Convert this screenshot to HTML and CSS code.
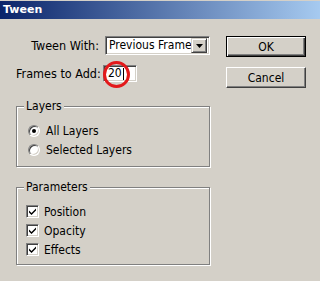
FILE: index.html
```html
<!DOCTYPE html>
<html>
<head>
<meta charset="utf-8">
<link rel="stylesheet" href="styles.css">
</head>
<body>
<div class="window">
  <div class="titlebar">Tween</div>
  <div class="content">
    <div class="left">
      <div class="form">
        <label class="lbl">Tween With:</label>
        <div class="select">
          <span class="select-text">Previous Frame</span>
          <span class="select-btn"><svg width="7" height="4" viewBox="0 0 7 4"><path d="M0 0h7L3.5 4z" fill="#000"/></svg></span>
        </div>
        <label class="lbl">Frames to Add:</label>
        <div class="input-wrap">
          <div class="input">20<span class="caret"></span></div>
          <span class="circle"></span>
        </div>
      </div>
      <div class="group layers">
        <span class="legend">Layers</span>
        <div class="opt"><span class="radio on"></span>All Layers</div>
        <div class="opt"><span class="radio"></span>Selected Layers</div>
      </div>
      <div class="group params">
        <span class="legend">Parameters</span>
        <div class="opt"><span class="check"><svg width="9" height="9" viewBox="0 0 9 9"><path d="M1 3.5l2.5 2.5L8 1.5v2L3.5 8 1 5.5z" fill="#000"/></svg></span>Position</div>
        <div class="opt"><span class="check"><svg width="9" height="9" viewBox="0 0 9 9"><path d="M1 3.5l2.5 2.5L8 1.5v2L3.5 8 1 5.5z" fill="#000"/></svg></span>Opacity</div>
        <div class="opt"><span class="check"><svg width="9" height="9" viewBox="0 0 9 9"><path d="M1 3.5l2.5 2.5L8 1.5v2L3.5 8 1 5.5z" fill="#000"/></svg></span>Effects</div>
      </div>
    </div>
    <div class="right">
      <div class="btn default">OK</div>
      <div class="btn">Cancel</div>
    </div>
  </div>
</div>
</body>
</html>
```
FILE: styles.css
```css
html, body {
  margin: 0;
  padding: 0;
}
body {
  width: 320px;
  height: 281px;
  overflow: hidden;
  background: #d4d0c8;
  font-family: "DejaVu Sans", Verdana, sans-serif;
  font-stretch: condensed;
  font-size: 12px;
  color: #000;
  white-space: nowrap;
}
.window {
  width: 320px;
  height: 281px;
}
.titlebar {
  margin-top: 1px;
  height: 18px;
  line-height: 18px;
  padding-left: 3px;
  color: #fff;
  font-weight: bold;
  font-stretch: normal;
  font-size: 11px;
  background: linear-gradient(to right, #0a246a, #a6caf0);
}
.content {
  display: flex;
  padding: 17px 0 0 16px;
}
.left {
  width: 194px;
  display: flex;
  flex-direction: column;
}
.right {
  margin-left: 16px;
  width: 80px;
  display: flex;
  flex-direction: column;
  gap: 10px;
}
.form {
  display: grid;
  grid-template-columns: 83px auto;
  column-gap: 6px;
  row-gap: 10px;
  align-items: center;
}
.lbl {
  text-align: right;
  font-size: 12.5px;
}
.select {
  width: 105px;
  height: 19px;
  box-sizing: border-box;
  background: #fff;
  border-top: 1px solid #808080;
  border-left: 1px solid #808080;
  border-right: 1px solid #fff;
  border-bottom: 1px solid #fff;
  box-shadow: inset 1px 1px 0 #404040, inset -1px -1px 0 #d4d0c8;
  display: flex;
  align-items: center;
  padding: 2px;
}
.select-text {
  flex: 1;
  padding-left: 1px;
  line-height: 13px;
  overflow: hidden;
}
.select-btn {
  width: 16px;
  height: 15px;
  flex: none;
  box-sizing: border-box;
  background: #d4d0c8;
  border-top: 1px solid #d4d0c8;
  border-left: 1px solid #d4d0c8;
  border-right: 1px solid #404040;
  border-bottom: 1px solid #404040;
  box-shadow: inset 1px 1px 0 #fff, inset -1px -1px 0 #808080;
  display: flex;
  align-items: center;
  justify-content: center;
}
.input-wrap {
  position: relative;
  width: 34px;
  height: 17px;
  margin-left: -2px;
}
.input {
  width: 34px;
  height: 17px;
  box-sizing: border-box;
  background: #fff;
  border-top: 1px solid #808080;
  border-left: 1px solid #808080;
  border-right: 1px solid #fff;
  border-bottom: 1px solid #fff;
  box-shadow: inset 1px 1px 0 #404040, inset -1px -1px 0 #d4d0c8;
  padding-left: 4px;
  line-height: 15px;
  display: flex;
  align-items: center;
}
.caret {
  display: inline-block;
  width: 1px;
  height: 12px;
  background: #000;
  margin-left: 1px;
}
.circle {
  position: absolute;
  left: 0;
  top: -4px;
  width: 27px;
  height: 27px;
  box-sizing: border-box;
  border: 3px solid #e3191b;
  border-radius: 50%;
}
.group {
  position: relative;
  box-sizing: border-box;
  border: 1px solid #808080;
  box-shadow: inset 1px 1px 0 #fff, 1px 1px 0 #fff;
  display: flex;
  flex-direction: column;
  padding: 14px 0 0 10px;
}
.layers {
  margin-top: 24px;
  height: 61px;
  padding-left: 11px;
}
.params {
  margin-top: 20px;
  height: 78px;
  padding-left: 9px;
}
.legend {
  position: absolute;
  top: -8px;
  left: 7px;
  padding: 0 2px;
  background: #d4d0c8;
  line-height: 14px;
}
.opt {
  height: 19px;
  display: flex;
  align-items: center;
}
.radio {
  width: 12px;
  height: 12px;
  box-sizing: border-box;
  border-radius: 50%;
  background: #fff;
  border: 1px solid;
  border-color: #808080 #fff #fff #808080;
  box-shadow: inset 1px 1px 0 #404040, inset -1px -1px 0 #d4d0c8;
  margin-right: 6px;
  position: relative;
}
.radio.on::after {
  content: "";
  position: absolute;
  left: 3px;
  top: 3px;
  width: 4px;
  height: 4px;
  border-radius: 50%;
  background: #000;
}
.check {
  width: 13px;
  height: 13px;
  box-sizing: border-box;
  background: #fff;
  border: 1px solid;
  border-color: #808080 #fff #fff #808080;
  box-shadow: inset 1px 1px 0 #404040, inset -1px -1px 0 #d4d0c8;
  margin-right: 5px;
  display: flex;
  align-items: center;
  justify-content: center;
}
.btn {
  height: 21px;
  box-sizing: border-box;
  border: 1px solid;
  border-color: #fff #404040 #404040 #fff;
  box-shadow: inset -1px -1px 0 #808080;
  display: flex;
  align-items: center;
  justify-content: center;
  background: #d4d0c8;
}
.btn.default {
  border: 1px solid #000;
  box-shadow: inset 1px 1px 0 #fff, inset -1px -1px 0 #404040, inset -2px -2px 0 #808080;
}
```
